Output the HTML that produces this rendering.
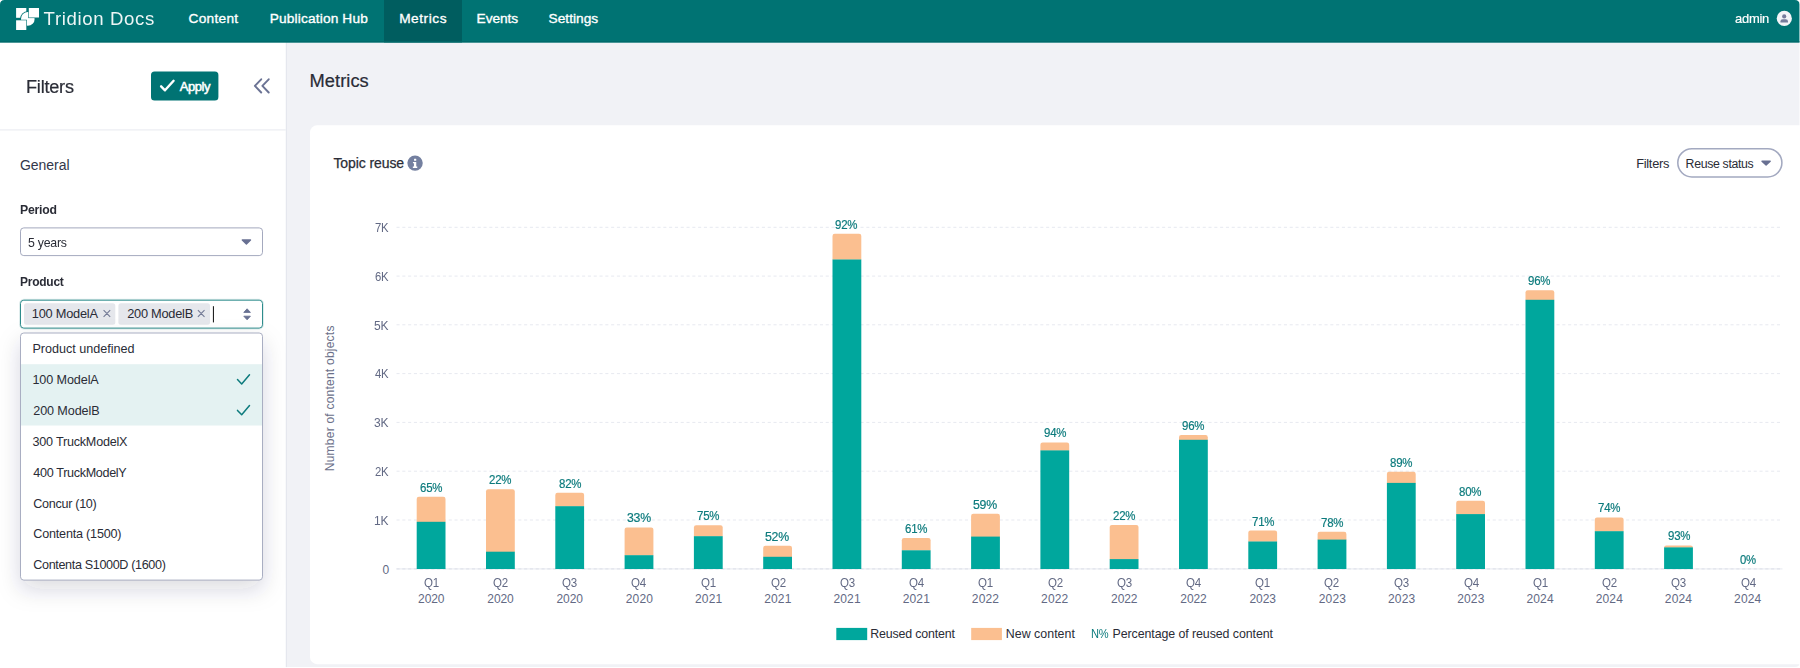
<!DOCTYPE html>
<html><head><meta charset="utf-8"><title>Tridion Docs - Metrics</title>
<style>
*{box-sizing:border-box;margin:0;padding:0}
html,body{width:1800px;height:668px;overflow:hidden;background:#fff;font-family:"Liberation Sans",sans-serif}
#page{position:relative;width:1800px;height:668px;overflow:hidden;background:#fff}
#page>div,#page>svg{position:absolute}
#txt{left:0;top:0;width:1800px;height:668px;z-index:20;pointer-events:none}
#txt span{position:absolute;white-space:pre;display:block}
#bg{left:0;top:0;z-index:1}
#chart{left:0;top:0;z-index:2}
#icons{left:0;top:0;z-index:10}

</style></head><body>
<div id="page">
<svg id="bg" width="1800" height="668" viewBox="0 0 1800 668">
<defs>
<filter id="ds" x="-30%" y="-20%" width="160%" height="170%"><feDropShadow dx="0" dy="9" stdDeviation="11" flood-color="#282d46" flood-opacity=".17"/></filter>
</defs>
<rect x="0" y="0" width="1800" height="668" fill="#fff"/>
<!-- main -->
<path d="M286 42H1799.45V662.5Q1799.45 667.1 1794.85 667.1H286Z" fill="#f1f2f6"/>
<rect x="285.8" y="42" width="1" height="625.1" fill="#e2e4eb"/>
<!-- card -->
<rect x="310" y="125.35" width="1500" height="538.8" rx="7" fill="#fff"/>
<!-- nav -->
<path d="M0 42.4V4.6Q0 0 4.6 0H1794.85Q1799.45 0 1799.45 4.6V42.4Z" fill="#007373"/>
<rect x="384" y="0" width="78" height="42.4" fill="#005d5f"/>
<rect x="0" y="41.2" width="1799.45" height="1.2" fill="#00696a"/>
<!-- sidebar divider -->
<rect x="0" y="129.3" width="285.8" height="1.2" fill="#ecedf2"/>
<!-- apply -->
<rect x="151" y="71.5" width="67.4" height="29" rx="3.5" fill="#007373"/>
<!-- period -->
<rect x="20.5" y="227.9" width="242" height="27.7" rx="3.3" fill="#fff" stroke="#a4a9be" stroke-width="1"/>
<!-- product -->
<rect x="20.5" y="300.2" width="242" height="27.9" rx="3.3" fill="#fff" stroke="#2f8d8d" stroke-width="1"/>
<rect x="19.6" y="299.3" width="243.8" height="29.7" rx="4.2" fill="none" stroke="#007373" stroke-opacity=".14" stroke-width="1"/>
<rect x="24" y="303.3" width="91.3" height="21.4" rx="2.5" fill="#e5e7ec"/>
<rect x="118.4" y="303.3" width="91.6" height="21.4" rx="2.5" fill="#e5e7ec"/>
<rect x="212.9" y="306.2" width="1.1" height="16.2" fill="#222"/>
<!-- dropdown -->
<rect x="20.5" y="333" width="242" height="247.1" rx="3.3" fill="#fff" filter="url(#ds)"/>
<rect x="21" y="364.2" width="241" height="61.3" fill="#e4f2f2"/>
<rect x="20.5" y="333" width="242" height="247.1" rx="3.3" fill="none" stroke="#a9aec2" stroke-width="1"/>
<!-- pill -->
<rect x="1677.8" y="148.8" width="104.1" height="28.1" rx="14.05" fill="#fff" stroke="#a3a9c0" stroke-width="1.55"/>
<!-- avatar -->
<circle cx="1784.3" cy="18.4" r="7.6" fill="#f3f4f8"/>
</svg>
<svg id="chart" width="1800" height="668" viewBox="0 0 1800 668">
<line x1="396.5" x2="1780.5" y1="227.3" y2="227.3" stroke="#e7e9f0" stroke-width="1" stroke-dasharray="3.1 2.7"/>
<line x1="396.5" x2="1780.5" y1="276.1" y2="276.1" stroke="#e7e9f0" stroke-width="1" stroke-dasharray="3.1 2.7"/>
<line x1="396.5" x2="1780.5" y1="324.8" y2="324.8" stroke="#e7e9f0" stroke-width="1" stroke-dasharray="3.1 2.7"/>
<line x1="396.5" x2="1780.5" y1="373.6" y2="373.6" stroke="#e7e9f0" stroke-width="1" stroke-dasharray="3.1 2.7"/>
<line x1="396.5" x2="1780.5" y1="422.4" y2="422.4" stroke="#e7e9f0" stroke-width="1" stroke-dasharray="3.1 2.7"/>
<line x1="396.5" x2="1780.5" y1="471.2" y2="471.2" stroke="#e7e9f0" stroke-width="1" stroke-dasharray="3.1 2.7"/>
<line x1="396.5" x2="1780.5" y1="520.0" y2="520.0" stroke="#e7e9f0" stroke-width="1" stroke-dasharray="3.1 2.7"/>
<line x1="396.5" x2="1782.5" y1="568.9" y2="568.9" stroke="#eceef3" stroke-width="1.1"/>
<line x1="396.5" x2="1782.5" y1="568.9" y2="568.9" stroke="#e1e4ec" stroke-width="1.1" stroke-dasharray="3.1 2.7"/>
<path d="M416.70 522.10V498.90Q416.70 496.70 418.90 496.70H443.30Q445.50 496.70 445.50 498.90V522.10Z" fill="#fbbf90"/>
<rect x="416.70" y="521.80" width="28.80" height="47.20" fill="#00a79d"/>
<path d="M486.00 552.00V491.50Q486.00 489.30 488.20 489.30H512.60Q514.80 489.30 514.80 491.50V552.00Z" fill="#fbbf90"/>
<rect x="486.00" y="551.70" width="28.80" height="17.30" fill="#00a79d"/>
<path d="M555.30 506.50V495.00Q555.30 492.80 557.50 492.80H581.90Q584.10 492.80 584.10 495.00V506.50Z" fill="#fbbf90"/>
<rect x="555.30" y="506.20" width="28.80" height="62.80" fill="#00a79d"/>
<path d="M624.60 555.50V529.70Q624.60 527.50 626.80 527.50H651.20Q653.40 527.50 653.40 529.70V555.50Z" fill="#fbbf90"/>
<rect x="624.60" y="555.20" width="28.80" height="13.80" fill="#00a79d"/>
<path d="M693.90 536.50V527.40Q693.90 525.20 696.10 525.20H720.50Q722.70 525.20 722.70 527.40V536.50Z" fill="#fbbf90"/>
<rect x="693.90" y="536.20" width="28.80" height="32.80" fill="#00a79d"/>
<path d="M763.20 557.10V547.90Q763.20 545.70 765.40 545.70H789.80Q792.00 545.70 792.00 547.90V557.10Z" fill="#fbbf90"/>
<rect x="763.20" y="556.80" width="28.80" height="12.20" fill="#00a79d"/>
<path d="M832.50 259.80V235.90Q832.50 233.70 834.70 233.70H859.10Q861.30 233.70 861.30 235.90V259.80Z" fill="#fbbf90"/>
<rect x="832.50" y="259.50" width="28.80" height="309.50" fill="#00a79d"/>
<path d="M901.80 550.60V540.20Q901.80 538.00 904.00 538.00H928.40Q930.60 538.00 930.60 540.20V550.60Z" fill="#fbbf90"/>
<rect x="901.80" y="550.30" width="28.80" height="18.70" fill="#00a79d"/>
<path d="M971.10 536.90V516.00Q971.10 513.80 973.30 513.80H997.70Q999.90 513.80 999.90 516.00V536.90Z" fill="#fbbf90"/>
<rect x="971.10" y="536.60" width="28.80" height="32.40" fill="#00a79d"/>
<path d="M1040.40 450.70V444.70Q1040.40 442.50 1042.60 442.50H1067.00Q1069.20 442.50 1069.20 444.70V450.70Z" fill="#fbbf90"/>
<rect x="1040.40" y="450.40" width="28.80" height="118.60" fill="#00a79d"/>
<path d="M1109.70 559.40V527.10Q1109.70 524.90 1111.90 524.90H1136.30Q1138.50 524.90 1138.50 527.10V559.40Z" fill="#fbbf90"/>
<rect x="1109.70" y="559.10" width="28.80" height="9.90" fill="#00a79d"/>
<path d="M1179.00 440.10V437.20Q1179.00 435.00 1181.20 435.00H1205.60Q1207.80 435.00 1207.80 437.20V440.10Z" fill="#fbbf90"/>
<rect x="1179.00" y="439.80" width="28.80" height="129.20" fill="#00a79d"/>
<path d="M1248.30 541.80V532.80Q1248.30 530.60 1250.50 530.60H1274.90Q1277.10 530.60 1277.10 532.80V541.80Z" fill="#fbbf90"/>
<rect x="1248.30" y="541.50" width="28.80" height="27.50" fill="#00a79d"/>
<path d="M1317.60 539.90V533.90Q1317.60 531.70 1319.80 531.70H1344.20Q1346.40 531.70 1346.40 533.90V539.90Z" fill="#fbbf90"/>
<rect x="1317.60" y="539.60" width="28.80" height="29.40" fill="#00a79d"/>
<path d="M1386.90 483.20V474.00Q1386.90 471.80 1389.10 471.80H1413.50Q1415.70 471.80 1415.70 474.00V483.20Z" fill="#fbbf90"/>
<rect x="1386.90" y="482.90" width="28.80" height="86.10" fill="#00a79d"/>
<path d="M1456.20 514.40V503.00Q1456.20 500.80 1458.40 500.80H1482.80Q1485.00 500.80 1485.00 503.00V514.40Z" fill="#fbbf90"/>
<rect x="1456.20" y="514.10" width="28.80" height="54.90" fill="#00a79d"/>
<path d="M1525.50 300.10V292.40Q1525.50 290.20 1527.70 290.20H1552.10Q1554.30 290.20 1554.30 292.40V300.10Z" fill="#fbbf90"/>
<rect x="1525.50" y="299.80" width="28.80" height="269.20" fill="#00a79d"/>
<path d="M1594.80 531.50V519.80Q1594.80 517.60 1597.00 517.60H1621.40Q1623.60 517.60 1623.60 519.80V531.50Z" fill="#fbbf90"/>
<rect x="1594.80" y="531.20" width="28.80" height="37.80" fill="#00a79d"/>
<path d="M1664.10 547.70V547.70Q1664.10 545.50 1666.30 545.50H1690.70Q1692.90 545.50 1692.90 547.70V547.70Z" fill="#fbbf90"/>
<rect x="1664.10" y="547.40" width="28.80" height="21.60" fill="#00a79d"/>
<rect x="836.3" y="627.9" width="30.9" height="12.2" fill="#00a79d"/>
<rect x="971.2" y="627.9" width="30.7" height="12.2" fill="#fbbf90"/>
</svg>
<svg id="icons" width="1800" height="668" viewBox="0 0 1800 668">
<!-- logo -->
<rect x="16.1" y="8" width="10.2" height="9.8" fill="#fff"/>
<circle cx="27.8" cy="18.9" r="7.7" fill="#007373"/>
<circle cx="27.8" cy="18.9" r="6.85" fill="#fff"/>
<rect x="28.25" y="7.4" width="11.4" height="10.7" fill="#007373"/>
<rect x="28.8" y="8" width="10.2" height="9.5" fill="#fff"/>
<rect x="15.5" y="19.75" width="11.4" height="10.9" fill="#007373"/>
<rect x="16.1" y="20.3" width="10.2" height="9.7" fill="#fff"/>
<!-- avatar person -->
<g fill="#767c9c"><circle cx="1784.2" cy="16.4" r="2.1"/><path d="M1780.4 22.6v-1a2.3 2.3 0 0 1 2.3-2.3h3a2.3 2.3 0 0 1 2.3 2.3v1z"/></g>
<!-- apply check -->
<path d="M161.1 86.3l3.9 4 8.6-9.5" fill="none" stroke="#fff" stroke-width="2.4" stroke-linecap="round" stroke-linejoin="round"/>
<!-- collapse chevrons -->
<path d="M261.2 79.3l-6.3 6.6 6.3 6.6M268.7 79.3l-6.3 6.6 6.3 6.6" fill="none" stroke="#6b7394" stroke-width="1.95" stroke-linecap="round" stroke-linejoin="round"/>
<!-- period caret -->
<path d="M242.3 240h8.2l-4.1 3.9z" fill="#687092" stroke="#687092" stroke-width="1.4" stroke-linejoin="round"/>
<!-- tag x -->
<path d="M103.6 310.2l6.6 6.6M110.2 310.2l-6.6 6.6M197.9 310.2l6.6 6.6M204.5 310.2l-6.6 6.6" stroke="#737a96" stroke-width="1.1" fill="none"/>
<!-- sort icon -->
<path d="M243.8 312.4h6.6l-3.3-3.6zM243.8 316.2h6.6l-3.3 3.6z" fill="#687092" stroke="#687092" stroke-width=".9" stroke-linejoin="round"/>
<!-- pill caret -->
<path d="M1762 161.2h8.2l-4.1 3.9z" fill="#687092" stroke="#687092" stroke-width="1.4" stroke-linejoin="round"/>
<!-- info icon -->
<circle cx="415.05" cy="163.1" r="7.7" fill="#7480a0"/>
<g fill="#fff" transform="translate(.35 -.2)"><rect x="413.7" y="158.9" width="2.2" height="2.1" rx=".4"/><path d="M412.6 162.2h3.3v4.6h1v1.3h-4.4v-1.3h1.1v-3.3h-1z"/></g>
<!-- y axis title -->
<text transform="translate(334.4 471.2) rotate(-90)" font-family="Liberation Sans, sans-serif" font-size="12" fill="#6b7089" textLength="145.6" lengthAdjust="spacing">Number of content objects</text>
</svg>
<svg id="checks" style="position:absolute;left:0;top:0;z-index:11" width="1800" height="668" viewBox="0 0 1800 668">
<path d="M237.5 379.6l4.2 4.4 7.8-9.3M237.5 410.4l4.2 4.4 7.8-9.3" fill="none" stroke="#0d7b7d" stroke-width="1.5" stroke-linecap="round" stroke-linejoin="round"/>
</svg>

<div id="txt">
<span id="t0" style="left:43.60px;top:10.26px;font-size:18.60px;line-height:18.60px;color:#ffffff;letter-spacing:0.630px;opacity:.93;">Tridion Docs</span>
<span id="t1" style="left:188.48px;top:12.40px;font-size:13.70px;line-height:13.70px;color:#ffffff;letter-spacing:0.278px;-webkit-text-stroke:0.35px #fff;">Content</span>
<span id="t2" style="left:269.82px;top:12.40px;font-size:13.70px;line-height:13.70px;color:#ffffff;letter-spacing:0.148px;-webkit-text-stroke:0.35px #fff;">Publication Hub</span>
<span id="t3" style="left:399.14px;top:12.40px;font-size:13.70px;line-height:13.70px;color:#ffffff;letter-spacing:0.548px;-webkit-text-stroke:0.35px #fff;">Metrics</span>
<span id="t4" style="left:476.58px;top:12.40px;font-size:13.70px;line-height:13.70px;color:#ffffff;letter-spacing:-0.044px;-webkit-text-stroke:0.35px #fff;">Events</span>
<span id="t5" style="left:548.48px;top:12.40px;font-size:13.70px;line-height:13.70px;color:#ffffff;letter-spacing:0.039px;-webkit-text-stroke:0.35px #fff;">Settings</span>
<span id="t6" style="left:1734.94px;top:11.57px;font-size:13.50px;line-height:13.50px;color:#ffffff;letter-spacing:-0.250px;-webkit-text-stroke:0.2px #fff;transform:scaleX(0.9583);transform-origin:0 0;">admin</span>
<span id="t7" style="left:25.92px;top:78.00px;font-size:18.90px;line-height:18.90px;color:#2a2c36;letter-spacing:-0.250px;-webkit-text-stroke:0.2px #2a2c36;transform:scaleX(0.9617);transform-origin:0 0;">Filters</span>
<span id="t8" style="left:179.84px;top:80.00px;font-size:13.00px;line-height:13.00px;color:#ffffff;letter-spacing:-0.483px;-webkit-text-stroke:0.5px #fff;">Apply</span>
<span id="t9" style="left:19.92px;top:158.15px;font-size:14.00px;line-height:14.00px;color:#33374a;letter-spacing:-0.029px;">General</span>
<span id="t10" style="left:19.92px;top:204.16px;font-size:12.80px;line-height:12.80px;color:#2a2c36;font-weight:bold;letter-spacing:-0.250px;transform:scaleX(0.9569);transform-origin:0 0;">Period</span>
<span id="t11" style="left:28.24px;top:237.16px;font-size:12.80px;line-height:12.80px;color:#2a2c36;letter-spacing:-0.250px;transform:scaleX(0.9632);transform-origin:0 0;">5 years</span>
<span id="t12" style="left:19.92px;top:276.16px;font-size:12.80px;line-height:12.80px;color:#2a2c36;font-weight:bold;letter-spacing:-0.250px;transform:scaleX(0.9356);transform-origin:0 0;">Product</span>
<span id="t13" style="left:31.82px;top:308.16px;font-size:12.80px;line-height:12.80px;color:#2a2c36;letter-spacing:-0.237px;">100 ModelA</span>
<span id="t14" style="left:127.16px;top:308.16px;font-size:12.80px;line-height:12.80px;color:#2a2c36;letter-spacing:-0.249px;">200 ModelB</span>
<span id="t15" style="left:32.48px;top:343.33px;font-size:12.60px;line-height:12.60px;color:#2a2c36;letter-spacing:-0.017px;">Product undefined</span>
<span id="t16" style="left:32.48px;top:374.33px;font-size:12.60px;line-height:12.60px;color:#2a2c36;letter-spacing:-0.104px;">100 ModelA</span>
<span id="t17" style="left:33.28px;top:405.33px;font-size:12.60px;line-height:12.60px;color:#2a2c36;letter-spacing:-0.104px;">200 ModelB</span>
<span id="t18" style="left:32.48px;top:436.33px;font-size:12.60px;line-height:12.60px;color:#2a2c36;letter-spacing:-0.211px;">300 TruckModelX</span>
<span id="t19" style="left:33.28px;top:467.33px;font-size:12.60px;line-height:12.60px;color:#2a2c36;letter-spacing:-0.324px;">400 TruckModelY</span>
<span id="t20" style="left:33.28px;top:498.33px;font-size:12.60px;line-height:12.60px;color:#2a2c36;letter-spacing:-0.300px;">Concur (10)</span>
<span id="t21" style="left:33.28px;top:528.33px;font-size:12.60px;line-height:12.60px;color:#2a2c36;letter-spacing:-0.197px;">Contenta (1500)</span>
<span id="t22" style="left:33.28px;top:559.33px;font-size:12.60px;line-height:12.60px;color:#2a2c36;letter-spacing:-0.354px;">Contenta S1000D (1600)</span>
<span id="t23" style="left:309.46px;top:71.51px;font-size:18.30px;line-height:18.30px;color:#2a2c36;letter-spacing:0.066px;-webkit-text-stroke:0.2px #2a2c36;">Metrics</span>
<span id="t24" style="left:333.38px;top:156.15px;font-size:14.00px;line-height:14.00px;color:#2a2c36;letter-spacing:-0.085px;-webkit-text-stroke:0.25px #2a2c36;">Topic reuse</span>
<span id="t25" style="left:1636.14px;top:158.16px;font-size:12.80px;line-height:12.80px;color:#2a2c36;letter-spacing:-0.257px;">Filters</span>
<span id="t26" style="left:1685.58px;top:157.59px;font-size:12.30px;line-height:12.30px;color:#2a2c36;letter-spacing:-0.327px;">Reuse status</span>
<span id="t27" style="left:375.16px;top:221.84px;font-size:12.00px;line-height:12.00px;color:#626984;letter-spacing:-0.250px;transform:scaleX(0.9429);transform-origin:0 0;">7K</span>
<span id="t28" style="left:375.16px;top:270.84px;font-size:12.00px;line-height:12.00px;color:#626984;letter-spacing:-0.250px;transform:scaleX(0.9429);transform-origin:0 0;">6K</span>
<span id="t29" style="left:374.36px;top:319.84px;font-size:12.00px;line-height:12.00px;color:#626984;letter-spacing:-0.250px;transform:scaleX(1.0005);transform-origin:0 0;">5K</span>
<span id="t30" style="left:375.16px;top:367.84px;font-size:12.00px;line-height:12.00px;color:#626984;letter-spacing:-0.250px;transform:scaleX(0.9429);transform-origin:0 0;">4K</span>
<span id="t31" style="left:374.36px;top:416.84px;font-size:12.00px;line-height:12.00px;color:#626984;letter-spacing:-0.250px;transform:scaleX(1.0005);transform-origin:0 0;">3K</span>
<span id="t32" style="left:375.16px;top:465.84px;font-size:12.00px;line-height:12.00px;color:#626984;letter-spacing:-0.250px;transform:scaleX(0.9429);transform-origin:0 0;">2K</span>
<span id="t33" style="left:374.36px;top:514.84px;font-size:12.00px;line-height:12.00px;color:#626984;letter-spacing:-0.250px;transform:scaleX(1.0005);transform-origin:0 0;">1K</span>
<span id="t34" style="left:382.38px;top:563.84px;font-size:12.00px;line-height:12.00px;color:#626984;letter-spacing:0.492px;">0</span>
<span id="t35" style="left:423.72px;top:576.84px;font-size:12.00px;line-height:12.00px;color:#626984;letter-spacing:-0.250px;transform:scaleX(0.9613);transform-origin:0 0;">Q1</span>
<span id="t36" style="left:418.11px;top:592.84px;font-size:12.00px;line-height:12.00px;color:#626984;letter-spacing:-0.108px;">2020</span>
<span id="t37" style="left:420.06px;top:481.59px;font-size:12.30px;line-height:12.30px;color:#0d7b7d;letter-spacing:-0.250px;-webkit-text-stroke:0.2px #0d7b7d;transform:scaleX(0.9318);transform-origin:0 0;">65%</span>
<span id="t38" style="left:492.94px;top:576.84px;font-size:12.00px;line-height:12.00px;color:#626984;letter-spacing:-0.250px;transform:scaleX(0.9613);transform-origin:0 0;">Q2</span>
<span id="t39" style="left:487.33px;top:592.84px;font-size:12.00px;line-height:12.00px;color:#626984;letter-spacing:-0.108px;">2020</span>
<span id="t40" style="left:489.28px;top:473.59px;font-size:12.30px;line-height:12.30px;color:#0d7b7d;letter-spacing:-0.250px;-webkit-text-stroke:0.2px #0d7b7d;transform:scaleX(0.9318);transform-origin:0 0;">22%</span>
<span id="t41" style="left:562.16px;top:576.84px;font-size:12.00px;line-height:12.00px;color:#626984;letter-spacing:-0.250px;transform:scaleX(0.9613);transform-origin:0 0;">Q3</span>
<span id="t42" style="left:556.55px;top:592.84px;font-size:12.00px;line-height:12.00px;color:#626984;letter-spacing:-0.108px;">2020</span>
<span id="t43" style="left:558.50px;top:477.59px;font-size:12.30px;line-height:12.30px;color:#0d7b7d;letter-spacing:-0.250px;-webkit-text-stroke:0.2px #0d7b7d;transform:scaleX(0.9318);transform-origin:0 0;">82%</span>
<span id="t44" style="left:631.38px;top:576.84px;font-size:12.00px;line-height:12.00px;color:#626984;letter-spacing:-0.250px;transform:scaleX(0.9613);transform-origin:0 0;">Q4</span>
<span id="t45" style="left:625.77px;top:592.84px;font-size:12.00px;line-height:12.00px;color:#626984;letter-spacing:0.159px;">2020</span>
<span id="t46" style="left:626.92px;top:511.59px;font-size:12.30px;line-height:12.30px;color:#0d7b7d;letter-spacing:-0.250px;-webkit-text-stroke:0.2px #0d7b7d;transform:scaleX(1.0005);transform-origin:0 0;">33%</span>
<span id="t47" style="left:700.60px;top:576.84px;font-size:12.00px;line-height:12.00px;color:#626984;letter-spacing:-0.250px;transform:scaleX(0.9613);transform-origin:0 0;">Q1</span>
<span id="t48" style="left:694.99px;top:592.84px;font-size:12.00px;line-height:12.00px;color:#626984;letter-spacing:0.159px;">2021</span>
<span id="t49" style="left:696.94px;top:509.59px;font-size:12.30px;line-height:12.30px;color:#0d7b7d;letter-spacing:-0.250px;-webkit-text-stroke:0.2px #0d7b7d;transform:scaleX(0.9318);transform-origin:0 0;">75%</span>
<span id="t50" style="left:770.62px;top:576.84px;font-size:12.00px;line-height:12.00px;color:#626984;letter-spacing:-0.250px;transform:scaleX(0.9613);transform-origin:0 0;">Q2</span>
<span id="t51" style="left:764.21px;top:592.84px;font-size:12.00px;line-height:12.00px;color:#626984;letter-spacing:0.159px;">2021</span>
<span id="t52" style="left:765.36px;top:530.59px;font-size:12.30px;line-height:12.30px;color:#0d7b7d;letter-spacing:-0.250px;-webkit-text-stroke:0.2px #0d7b7d;transform:scaleX(1.0005);transform-origin:0 0;">52%</span>
<span id="t53" style="left:839.84px;top:576.84px;font-size:12.00px;line-height:12.00px;color:#626984;letter-spacing:-0.250px;transform:scaleX(0.9613);transform-origin:0 0;">Q3</span>
<span id="t54" style="left:833.43px;top:592.84px;font-size:12.00px;line-height:12.00px;color:#626984;letter-spacing:0.159px;">2021</span>
<span id="t55" style="left:835.38px;top:218.59px;font-size:12.30px;line-height:12.30px;color:#0d7b7d;letter-spacing:-0.250px;-webkit-text-stroke:0.2px #0d7b7d;transform:scaleX(0.9318);transform-origin:0 0;">92%</span>
<span id="t56" style="left:909.06px;top:576.84px;font-size:12.00px;line-height:12.00px;color:#626984;letter-spacing:-0.250px;transform:scaleX(0.9613);transform-origin:0 0;">Q4</span>
<span id="t57" style="left:902.65px;top:592.84px;font-size:12.00px;line-height:12.00px;color:#626984;letter-spacing:0.159px;">2021</span>
<span id="t58" style="left:904.60px;top:522.59px;font-size:12.30px;line-height:12.30px;color:#0d7b7d;letter-spacing:-0.250px;-webkit-text-stroke:0.2px #0d7b7d;transform:scaleX(0.9318);transform-origin:0 0;">61%</span>
<span id="t59" style="left:978.28px;top:576.84px;font-size:12.00px;line-height:12.00px;color:#626984;letter-spacing:-0.250px;transform:scaleX(0.9613);transform-origin:0 0;">Q1</span>
<span id="t60" style="left:971.87px;top:592.84px;font-size:12.00px;line-height:12.00px;color:#626984;letter-spacing:0.159px;">2022</span>
<span id="t61" style="left:973.02px;top:498.59px;font-size:12.30px;line-height:12.30px;color:#0d7b7d;letter-spacing:-0.250px;-webkit-text-stroke:0.2px #0d7b7d;transform:scaleX(1.0005);transform-origin:0 0;">59%</span>
<span id="t62" style="left:1047.50px;top:576.84px;font-size:12.00px;line-height:12.00px;color:#626984;letter-spacing:-0.250px;transform:scaleX(0.9613);transform-origin:0 0;">Q2</span>
<span id="t63" style="left:1041.09px;top:592.84px;font-size:12.00px;line-height:12.00px;color:#626984;letter-spacing:0.159px;">2022</span>
<span id="t64" style="left:1043.84px;top:426.59px;font-size:12.30px;line-height:12.30px;color:#0d7b7d;letter-spacing:-0.250px;-webkit-text-stroke:0.2px #0d7b7d;transform:scaleX(0.9318);transform-origin:0 0;">94%</span>
<span id="t65" style="left:1116.72px;top:576.84px;font-size:12.00px;line-height:12.00px;color:#626984;letter-spacing:-0.250px;transform:scaleX(0.9613);transform-origin:0 0;">Q3</span>
<span id="t66" style="left:1111.11px;top:592.84px;font-size:12.00px;line-height:12.00px;color:#626984;letter-spacing:-0.108px;">2022</span>
<span id="t67" style="left:1113.06px;top:509.59px;font-size:12.30px;line-height:12.30px;color:#0d7b7d;letter-spacing:-0.250px;-webkit-text-stroke:0.2px #0d7b7d;transform:scaleX(0.9318);transform-origin:0 0;">22%</span>
<span id="t68" style="left:1185.94px;top:576.84px;font-size:12.00px;line-height:12.00px;color:#626984;letter-spacing:-0.250px;transform:scaleX(0.9613);transform-origin:0 0;">Q4</span>
<span id="t69" style="left:1180.33px;top:592.84px;font-size:12.00px;line-height:12.00px;color:#626984;letter-spacing:-0.108px;">2022</span>
<span id="t70" style="left:1182.28px;top:419.59px;font-size:12.30px;line-height:12.30px;color:#0d7b7d;letter-spacing:-0.250px;-webkit-text-stroke:0.2px #0d7b7d;transform:scaleX(0.9318);transform-origin:0 0;">96%</span>
<span id="t71" style="left:1255.16px;top:576.84px;font-size:12.00px;line-height:12.00px;color:#626984;letter-spacing:-0.250px;transform:scaleX(0.9613);transform-origin:0 0;">Q1</span>
<span id="t72" style="left:1249.55px;top:592.84px;font-size:12.00px;line-height:12.00px;color:#626984;letter-spacing:-0.108px;">2023</span>
<span id="t73" style="left:1251.50px;top:515.59px;font-size:12.30px;line-height:12.30px;color:#0d7b7d;letter-spacing:-0.250px;-webkit-text-stroke:0.2px #0d7b7d;transform:scaleX(0.9318);transform-origin:0 0;">71%</span>
<span id="t74" style="left:1324.38px;top:576.84px;font-size:12.00px;line-height:12.00px;color:#626984;letter-spacing:-0.250px;transform:scaleX(0.9613);transform-origin:0 0;">Q2</span>
<span id="t75" style="left:1318.77px;top:592.84px;font-size:12.00px;line-height:12.00px;color:#626984;letter-spacing:0.159px;">2023</span>
<span id="t76" style="left:1320.72px;top:516.59px;font-size:12.30px;line-height:12.30px;color:#0d7b7d;letter-spacing:-0.250px;-webkit-text-stroke:0.2px #0d7b7d;transform:scaleX(0.9318);transform-origin:0 0;">78%</span>
<span id="t77" style="left:1393.60px;top:576.84px;font-size:12.00px;line-height:12.00px;color:#626984;letter-spacing:-0.250px;transform:scaleX(0.9613);transform-origin:0 0;">Q3</span>
<span id="t78" style="left:1387.99px;top:592.84px;font-size:12.00px;line-height:12.00px;color:#626984;letter-spacing:0.159px;">2023</span>
<span id="t79" style="left:1389.94px;top:456.59px;font-size:12.30px;line-height:12.30px;color:#0d7b7d;letter-spacing:-0.250px;-webkit-text-stroke:0.2px #0d7b7d;transform:scaleX(0.9318);transform-origin:0 0;">89%</span>
<span id="t80" style="left:1463.62px;top:576.84px;font-size:12.00px;line-height:12.00px;color:#626984;letter-spacing:-0.250px;transform:scaleX(0.9613);transform-origin:0 0;">Q4</span>
<span id="t81" style="left:1457.21px;top:592.84px;font-size:12.00px;line-height:12.00px;color:#626984;letter-spacing:0.159px;">2023</span>
<span id="t82" style="left:1459.16px;top:485.59px;font-size:12.30px;line-height:12.30px;color:#0d7b7d;letter-spacing:-0.250px;-webkit-text-stroke:0.2px #0d7b7d;transform:scaleX(0.9318);transform-origin:0 0;">80%</span>
<span id="t83" style="left:1532.84px;top:576.84px;font-size:12.00px;line-height:12.00px;color:#626984;letter-spacing:-0.250px;transform:scaleX(0.9613);transform-origin:0 0;">Q1</span>
<span id="t84" style="left:1526.43px;top:592.84px;font-size:12.00px;line-height:12.00px;color:#626984;letter-spacing:0.159px;">2024</span>
<span id="t85" style="left:1528.38px;top:274.59px;font-size:12.30px;line-height:12.30px;color:#0d7b7d;letter-spacing:-0.250px;-webkit-text-stroke:0.2px #0d7b7d;transform:scaleX(0.9318);transform-origin:0 0;">96%</span>
<span id="t86" style="left:1602.06px;top:576.84px;font-size:12.00px;line-height:12.00px;color:#626984;letter-spacing:-0.250px;transform:scaleX(0.9613);transform-origin:0 0;">Q2</span>
<span id="t87" style="left:1595.65px;top:592.84px;font-size:12.00px;line-height:12.00px;color:#626984;letter-spacing:0.159px;">2024</span>
<span id="t88" style="left:1597.60px;top:501.59px;font-size:12.30px;line-height:12.30px;color:#0d7b7d;letter-spacing:-0.250px;-webkit-text-stroke:0.2px #0d7b7d;transform:scaleX(0.9318);transform-origin:0 0;">74%</span>
<span id="t89" style="left:1671.28px;top:576.84px;font-size:12.00px;line-height:12.00px;color:#626984;letter-spacing:-0.250px;transform:scaleX(0.9613);transform-origin:0 0;">Q3</span>
<span id="t90" style="left:1664.87px;top:592.84px;font-size:12.00px;line-height:12.00px;color:#626984;letter-spacing:0.159px;">2024</span>
<span id="t91" style="left:1667.62px;top:529.59px;font-size:12.30px;line-height:12.30px;color:#0d7b7d;letter-spacing:-0.250px;-webkit-text-stroke:0.2px #0d7b7d;transform:scaleX(0.9318);transform-origin:0 0;">93%</span>
<span id="t92" style="left:1740.50px;top:576.84px;font-size:12.00px;line-height:12.00px;color:#626984;letter-spacing:-0.250px;transform:scaleX(0.9613);transform-origin:0 0;">Q4</span>
<span id="t93" style="left:1734.09px;top:592.84px;font-size:12.00px;line-height:12.00px;color:#626984;letter-spacing:0.159px;">2024</span>
<span id="t94" style="left:1739.60px;top:553.59px;font-size:12.30px;line-height:12.30px;color:#0d7b7d;letter-spacing:-0.250px;-webkit-text-stroke:0.2px #0d7b7d;transform:scaleX(0.9215);transform-origin:0 0;">0%</span>
<span id="t95" style="left:870.14px;top:627.50px;font-size:12.40px;line-height:12.40px;color:#2a2c36;letter-spacing:-0.160px;">Reused content</span>
<span id="t96" style="left:1005.82px;top:627.50px;font-size:12.40px;line-height:12.40px;color:#2a2c36;letter-spacing:0.017px;">New content</span>
<span id="t97" style="left:1091.36px;top:627.67px;font-size:12.20px;line-height:12.20px;color:#0d7b7d;letter-spacing:-0.250px;transform:scaleX(0.9103);transform-origin:0 0;">N%</span>
<span id="t98" style="left:1112.48px;top:627.50px;font-size:12.40px;line-height:12.40px;color:#2a2c36;letter-spacing:-0.077px;">Percentage of reused content</span>
</div>
</div></body></html>
